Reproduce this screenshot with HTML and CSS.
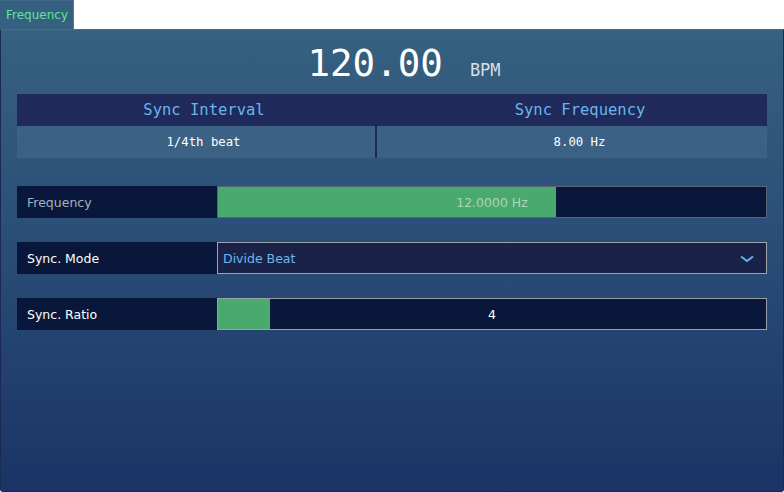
FILE: index.html
```html
<!DOCTYPE html>
<html>
<head>
<meta charset="utf-8">
<link rel="stylesheet" href="styles.css">
</head>
<body>
<div class="tabbar">
  <div class="tab">Frequency</div>
</div>
<div class="panel">
  <div class="bpm"><span class="bpm-val">120.00</span><span class="bpm-unit">BPM</span></div>
  <div class="sync-table">
    <div class="col col-left">
      <div class="th">Sync Interval</div>
      <div class="td">1/4th beat</div>
    </div>
    <div class="col col-right">
      <div class="th">Sync Frequency</div>
      <div class="td">8.00 Hz</div>
    </div>
  </div>
  <div class="row row-first">
    <div class="label dim">Frequency</div>
    <div class="slider">
      <div class="fill" style="width:338px"></div>
      <div class="slider-text dim-green">12.0000 Hz</div>
    </div>
  </div>
  <div class="row">
    <div class="label">Sync. Mode</div>
    <div class="dropdown">
      <span class="dd-text">Divide Beat</span>
      <svg class="chev" width="14" height="8" viewBox="0 0 14 8"><path d="M1 1.5 L7 6 L13 1.5" fill="none" stroke="#5fb4ec" stroke-width="2"/></svg>
    </div>
  </div>
  <div class="row">
    <div class="label">Sync. Ratio</div>
    <div class="slider light-border">
      <div class="fill" style="width:52px"></div>
      <div class="slider-text">4</div>
    </div>
  </div>
</div>
</body>
</html>
```
FILE: styles.css
```css
html, body {
  margin: 0;
  padding: 0;
  background: #ffffff;
}
body {
  width: 784px;
  height: 492px;
  overflow: hidden;
  font-family: "DejaVu Sans", Verdana, sans-serif;
}
.tabbar {
  height: 29px;
  display: flex;
  background: #ffffff;
}
.tab {
  width: 74px;
  height: 29px;
  box-sizing: border-box;
  background: #36607f;
  border-right: 1px solid #4a7c9c;
  border-top: 1px solid #3e6a88;
  color: #5fe39a;
  font-size: 12px;
  line-height: 28px;
  padding-left: 6px;
}
.panel {
  height: 463px;
  box-sizing: border-box;
  border-top: 1px solid #40708f;
  border-left: 1px solid #1a2a52;
  border-right: 1px solid #1a2a52;
  border-bottom: 1px solid #1a2a52;
  border-radius: 0 0 3px 3px;
  background: linear-gradient(to bottom, #36617f 0%, #2c5079 40%, #1b3366 100%);
  padding: 0 16px 0 16px;
}
.bpm {
  height: 64px;
  display: flex;
  justify-content: center;
  align-items: baseline;
  box-sizing: border-box;
  line-height: 1;
  padding-left: 24px;
  padding-top: 15px;
}
.bpm-val {
  font-family: "DejaVu Sans Mono", monospace;
  font-size: 37.5px;
  color: #ffffff;
}
.bpm-unit {
  font-family: "DejaVu Sans Mono", monospace;
  font-size: 17px;
  color: #d8dee6;
  margin-left: 27px;
}
.sync-table {
  display: flex;
  height: 64px;
  font-family: "DejaVu Sans Mono", monospace;
}
.col {
  display: flex;
  flex-direction: column;
}
.col-left {
  width: 358px;
  border-right: 2px solid #1c2c58;
}
.col-right {
  flex: 1;
}
.th {
  height: 32px;
  background: #1f2a5a;
  color: #6ab4ee;
  font-size: 15.5px;
  line-height: 33px;
  text-align: center;
  padding-left: 16px;
}
.td {
  height: 32px;
  background: #3b6185;
  color: #ffffff;
  font-size: 12.3px;
  line-height: 33px;
  text-align: center;
  padding-left: 15px;
}
.row {
  display: flex;
  height: 32px;
  margin-top: 24px;
}
.row-first {
  margin-top: 28px;
}
.label {
  width: 200px;
  background: #09183a;
  color: #ffffff;
  font-size: 12.5px;
  line-height: 33px;
  padding-left: 10px;
  box-sizing: border-box;
}
.label.dim {
  color: #a8b0c0;
}
.slider {
  flex: 1;
  position: relative;
  background: #09183a;
  border: 1px solid #5a6478;
  box-sizing: border-box;
  display: flex;
  align-items: center;
  justify-content: center;
  padding-top: 1px;
}
.slider.light-border {
  border-color: #9aa0a8;
}
.fill {
  position: absolute;
  left: 0;
  top: 0;
  bottom: 0;
  background: #4aaa6e;
}
.slider-text {
  position: relative;
  color: #ffffff;
  font-size: 12.5px;
}
.slider-text.dim-green {
  color: #a8d6b8;
}
.dropdown {
  flex: 1;
  background: #1a2248;
  border: 1px solid #a0a4aa;
  box-sizing: border-box;
  display: flex;
  align-items: center;
  justify-content: space-between;
  padding: 1px 12px 0 5px;
}
.dd-text {
  color: #6ab8f0;
  font-size: 12.5px;
}
.chev {
  display: block;
}
```
